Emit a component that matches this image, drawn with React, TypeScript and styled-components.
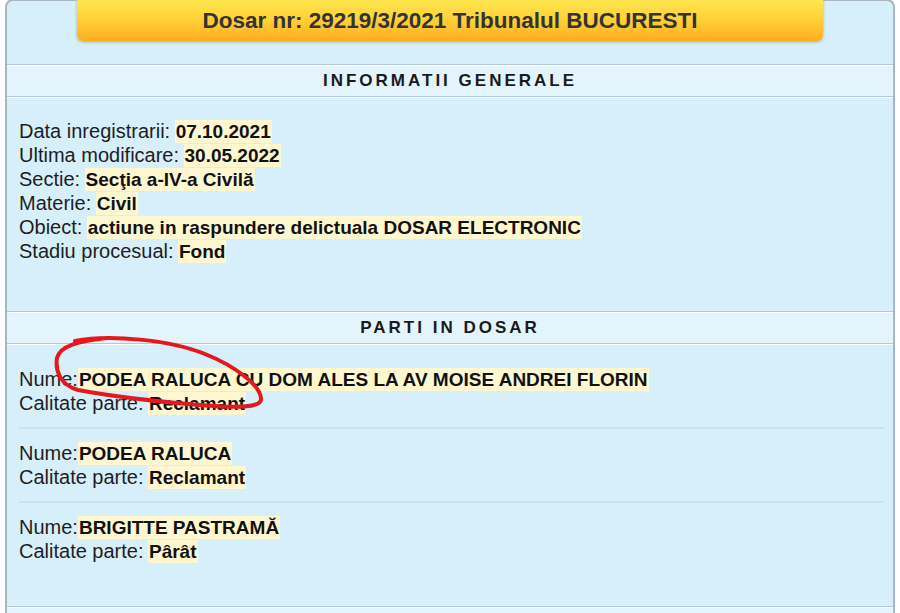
import styled, { createGlobalStyle } from "styled-components";

const GlobalStyle = createGlobalStyle`
  html, body {
    margin: 0;
    padding: 0;
    background: #fff;
  }
  body {
    font-family: "Liberation Sans", Arial, sans-serif;
    color: #1e1e1e;
  }
`;

interface Field {
  label: string;
  value: string;
}

const general: Field[] = [
  { label: "Data inregistrarii:", value: "07.10.2021" },
  { label: "Ultima modificare:", value: "30.05.2022" },
  { label: "Sectie:", value: "Secţia a-IV-a Civilă" },
  { label: "Materie:", value: "Civil" },
  { label: "Obiect:", value: "actiune in raspundere delictuala DOSAR ELECTRONIC" },
  { label: "Stadiu procesual:", value: "Fond" },
];

const parties = [
  { name: "PODEA RALUCA CU DOM ALES LA AV MOISE ANDREI FLORIN", role: "Reclamant" },
  { name: "PODEA RALUCA", role: "Reclamant" },
  { name: "BRIGITTE PASTRAMĂ", role: "Pârât" },
];

const App = () => {
  return (
    <Page>
      <GlobalStyle />
      <Panel>
        <TitleBar>Dosar nr: 29219/3/2021 Tribunalul BUCURESTI</TitleBar>

        <SectionHeader>INFORMATII GENERALE</SectionHeader>
        <InfoBody>
          {general.map((f) => (
            <Line key={f.label}>
              <Label>{f.label}</Label> <Value>{f.value}</Value>
            </Line>
          ))}
        </InfoBody>

        <SectionHeader>PARTI IN DOSAR</SectionHeader>
        <PartyList>
          {parties.map((p, i) => (
            <Party key={i} last={i === parties.length - 1}>
              <Line>
                <Label>Nume:</Label>
                <Value>{p.name}</Value>
              </Line>
              <Line>
                <Label>Calitate parte:</Label> <Value>{p.role}</Value>
              </Line>
            </Party>
          ))}
        </PartyList>

        <SectionHeader />
      </Panel>

      {/* hand-drawn red mark around the first party */}
      <Scribble viewBox="0 0 900 613" width="900" height="613">
        <path
          d="M 75 341 C 110 334, 170 340, 205 354 C 235 366, 262 386, 261 400 C 259 408, 235 408, 200 405 C 150 401, 110 396, 78 390 C 60 385, 55 370, 57 358 C 60 346, 78 341, 108 338"
          fill="none"
          stroke="#e3191e"
          strokeWidth="4"
          strokeLinecap="round"
          strokeLinejoin="round"
        />
      </Scribble>
    </Page>
  );
};

export default App;

const Page = styled.div`
  position: relative;
  width: 900px;
  height: 613px;
  overflow: hidden;
  background: #fff;
`;

const Panel = styled.div`
  margin: -1px 5px 0;
  height: 640px;
  background: #d6effb;
  border: 2px solid #aab6be;
  border-bottom: none;
  border-radius: 8px 8px 0 0;
`;

const TitleBar = styled.div`
  width: 746px;
  height: 41px;
  margin: -1px auto 0;
  box-sizing: border-box;
  display: flex;
  align-items: center;
  justify-content: center;
  padding-top: 1px;
  background: linear-gradient(to bottom, #ffe64e 0%, #ffd23a 45%, #ffad20 100%);
  border-radius: 0 0 6px 6px;
  box-shadow: 0 1px 3px rgba(120, 90, 20, 0.45);
  font-size: 22.5px;
  font-weight: bold;
  color: #333;
`;

const SectionHeader = styled.div`
  margin-top: 23px;
  height: 31px;
  display: flex;
  align-items: center;
  justify-content: center;
  background: #e3f4fc;
  border-top: 1px solid #b8c7cf;
  border-bottom: 1px solid #b8c7cf;
  box-shadow: inset 0 1px 0 #fff, 0 1px 0 #fff;
  font-size: 17px;
  font-weight: bold;
  letter-spacing: 3px;
  color: #1a1a1a;
`;

const InfoBody = styled.div`
  padding: 22px 12px 25px;
`;

const Line = styled.div`
  height: 24px;
  line-height: 24px;
  white-space: nowrap;
`;

const Label = styled.span`
  font-size: 20px;
  color: #1e1e1e;
`;

const Value = styled.span`
  font-size: 19px;
  font-weight: bold;
  color: #111;
  background: #fff7d0;
  padding: 1px 1px;
`;

const PartyList = styled.div`
  padding: 11px 9px 0 12px;

  & + ${SectionHeader} {
    margin-top: 31px;
  }
`;

const Party = styled.div<{ last: boolean }>`
  padding: 12px 0;
  border-bottom: ${({ last }) => (last ? "none" : "2px solid #c9e2ec")};
`;

const Scribble = styled.svg`
  position: absolute;
  left: 0;
  top: 0;
  pointer-events: none;
`;
